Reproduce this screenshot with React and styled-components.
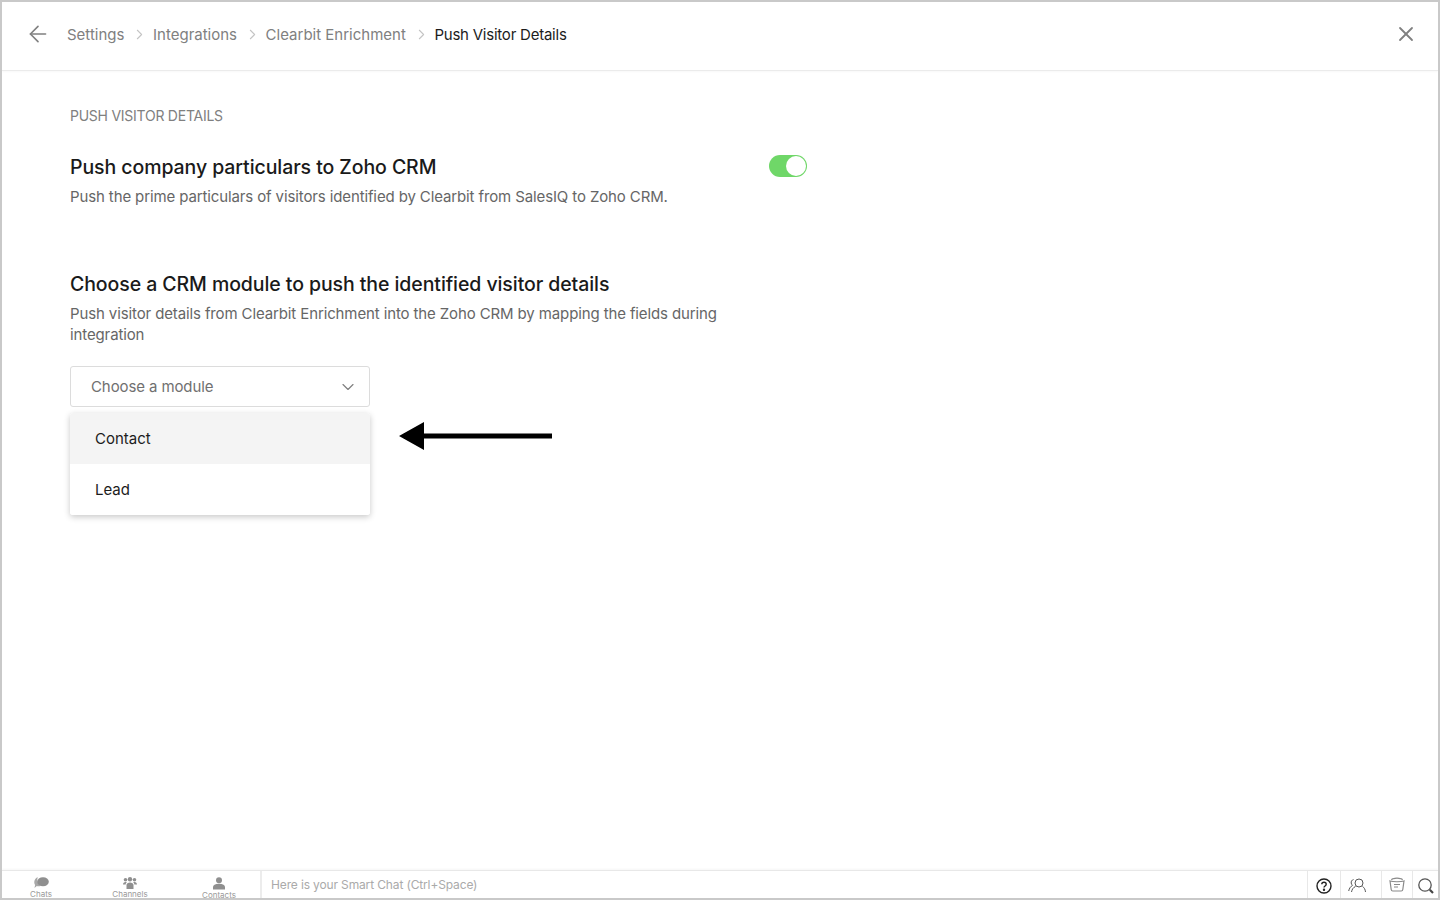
import styled, { createGlobalStyle } from "styled-components";
import { ArrowLeft, ChevronRight, ChevronDown, X } from "lucide-react";

const Global = createGlobalStyle`
  html, body { margin: 0; padding: 0; height: 100%; background: #fff; }
  * { box-sizing: border-box; }
  body { font-family: Inter, "Noto Sans", sans-serif; }
`;

const Frame = styled.div`
  height: 900px;
  border: 2px solid #c9c9c9;
  display: flex;
  flex-direction: column;
  overflow: hidden;
  background: #fff;
`;

const Header = styled.header`
  height: 69px;
  flex: none;
  display: flex;
  align-items: center;
  padding: 0 20px 4px 23px;
  border-bottom: 1px solid #ebebeb;
  box-shadow: 0 1px 2px rgba(0, 0, 0, 0.03);
`;

const BackButton = styled.div`
  display: flex;
  color: #808080;
  margin-right: 16px;
`;

const Crumb = styled.span`
  font-size: 15px;
  letter-spacing: ${(p) => (p.$current ? "-0.23px" : "0")};
  color: ${(p) => (p.$current ? "#1c1c1c" : "#808080")};
`;

const Sep = styled.span`
  display: flex;
  color: #c4c4c4;
  margin: 0 4.600px 0 7px;
`;

const CloseButton = styled.div`
  display: flex;
  margin-left: auto;
  color: #808080;
`;

const Main = styled.main`
  flex: 1;
  padding: 37px 68px 0;
`;

const SectionLabel = styled.div`
  font-size: 14px;
  line-height: 16px;
  letter-spacing: -0.25px;
  color: #808080;
  margin-bottom: 30px;
`;

const Block = styled.section`
  width: 737px;
  position: relative;
  margin-bottom: ${(p) => p.$gap || 0}px;
`;

const Title = styled.h2`
  margin: 0 0 6px;
  font-size: 19.5px;
  line-height: 26px;
  font-weight: 500;
  letter-spacing: -0.08px;
  color: #1a1a1a;
`;

const Desc = styled.p`
  margin: 0;
  width: 670px;
  font-size: 15px;
  line-height: 21px;
  letter-spacing: -0.12px;
  color: #666;
`;

const Toggle = styled.div`
  position: absolute;
  top: 1px;
  right: 0;
  width: 38px;
  height: 22px;
  border-radius: 11px;
  background: #6fd768;
  display: flex;
  justify-content: flex-end;
  padding: 1px;
`;

const Knob = styled.div`
  width: 20px;
  height: 20px;
  border-radius: 50%;
  background: #fff;
`;

const SelectWrap = styled.div`
  position: relative;
  width: 300px;
  margin-top: 21px;
`;

const SelectBox = styled.div`
  height: 41px;
  border: 1px solid #dcdcdc;
  border-radius: 3px;
  display: flex;
  align-items: center;
  justify-content: space-between;
  padding: 0 11px 0 20px;
  font-size: 15px;
  letter-spacing: -0.1px;
  color: #707070;
`;

const Arrowhead = styled(ChevronDown)`
  color: #808080;
`;

const Menu = styled.div`
  position: absolute;
  top: 47px;
  left: 0;
  width: 300px;
  background: #fff;
  border-radius: 3px;
  box-shadow: 0 2px 6px rgba(0, 0, 0, 0.22);
  overflow: hidden;
`;

const Option = styled.div`
  height: 51px;
  display: flex;
  align-items: center;
  padding-left: 25px;
  font-size: 15px;
  color: #1c1c1c;
  background: ${(p) => (p.$active ? "#f4f4f4" : "#fff")};
`;

const Pointer = styled.svg`
  position: absolute;
  top: 55px;
  left: 329px;
`;

const BottomBar = styled.footer`
  height: 28px;
  flex: none;
  display: flex;
  border-top: 1px solid #e8e8e8;
  box-shadow: 0 -1px 2px rgba(0, 0, 0, 0.04);
`;

const Tabs = styled.nav`
  width: 260px;
  flex: none;
  display: flex;
  border-right: 2px solid #ececec;
`;

const Tab = styled.div`
  width: ${(p) => p.$w}px;
  display: flex;
  flex-direction: column;
  align-items: center;
  padding-top: 6px;
  & > svg { flex: none; }
`;

const TabLabel = styled.span`
  flex: none;
  font-size: 8px;
  line-height: 9px;
  color: #999;
  margin-top: 1px;
`;

const SmartChat = styled.div`
  flex: 1;
  padding-left: 9px;
  font-size: 12px;
  letter-spacing: -0.14px;
  line-height: 28px;
  color: #aaa;
`;

const Tool = styled.div`
  width: ${(p) => p.$w}px;
  flex: none;
  display: flex;
  align-items: center;
  justify-content: center;
  border-left: 1px solid #e8e8e8;
  padding: ${(p) => p.$top ?? 2}px ${(p) => p.$shift || 0}px 0 0;
`;

const ChatsIcon = () => (
  <svg width="15" height="12" viewBox="0 0 15 12" fill="#8f8f8f">
    <path d="M1 2.500C2 1 3 .5 4 .3 2.800 2 2.800 5.500 6.500 9 5 9.500 3.500 9.300 2.800 9L.5 11l.6-3C0 6.500 0 4 1 2.500z" fill="#a8a8a8" />
    <ellipse cx="9" cy="4.700" rx="5.800" ry="4.500" />
  </svg>
);

const ChannelsIcon = () => (
  <svg width="14" height="12" viewBox="0 0 14 12" fill="#8f8f8f">
    <circle cx="2.500" cy="2.800" r="1.800" />
    <circle cx="7" cy="2.300" r="2.200" />
    <circle cx="11.500" cy="2.800" r="1.800" />
    <path d="M0 7.500C0 6 1 5 2.500 5c.6 0 1 .1 1.300.3C3 6 2.700 6.700 2.700 7.500zM11.300 7.500c0-.8-.3-1.500-1.100-2.200.3-.2.7-.3 1.300-.3C13 5 14 6 14 7.500z" />
    <path d="M3.500 12V8c0-1.500 1.500-2.500 3.500-2.500s3.500 1 3.500 2.500v4z" />
  </svg>
);

const ContactsIcon = () => (
  <svg width="12" height="13" viewBox="0 0 12 13" fill="#8f8f8f">
    <circle cx="6" cy="3.200" r="3" />
    <path d="M0 12.500V10c0-2 2-3.300 6-3.300S12 8 12 10v2.500z" />
  </svg>
);

const HelpIcon = () => (
  <svg width="16" height="16" viewBox="0 0 16 16" fill="none" stroke="#222" strokeWidth="1.400">
    <circle cx="8" cy="8" r="7" />
    <path d="M5.800 6.300C5.800 5 6.800 4.300 8 4.300s2.200.8 2.200 2c0 1.700-2.200 1.700-2.200 3.300" />
    <circle cx="8" cy="11.700" r=".5" fill="#222" />
  </svg>
);

const PeopleIcon = () => (
  <svg width="18" height="15" viewBox="0 0 18 15" fill="none" stroke="#555" strokeWidth="1">
    <circle cx="11" cy="5" r="4" />
    <path d="M7.500 8.500C5 9.500 4 11.500 3.500 14M14.500 8.500c1.800 1 2.700 3 3 5.500" />
    <path d="M5.500 1.500C3.800 2 3 3.400 3.200 5c.1 1 .6 1.800 1.300 2.400C2.500 8.500 1.200 10.500.7 13" />
  </svg>
);

const NotesIcon = () => (
  <svg width="16" height="15" viewBox="0 0 16 15" fill="none" stroke="#8a8a8a" strokeWidth="1.200">
    <path d="M1 4c3 1 11 1 14 0l-1.200 8.500c-.1.900-.7 1.500-1.600 1.500H3.800c-.9 0-1.500-.6-1.600-1.500z" />
    <path d="M2.500 3.200C2.800 2 3.500 1.800 4.500 1.700M13.500 3.200c-.3-1.200-1-1.400-2-1.500M4.500 1.700C6 .8 10 .8 11.500 1.700" />
    <path d="M5 7.500h6M5 10h4" />
  </svg>
);

const SearchIcon = () => (
  <svg width="18" height="18" viewBox="0 0 18 18" fill="none">
    <circle cx="8" cy="8" r="6.200" stroke="#555" strokeWidth="1.300" />
    <path d="M12.800 12.800L16 16" stroke="#444" strokeWidth="2.200" />
  </svg>
);

export default function App() {
  return (
    <Frame>
      <Global />
      <Header>
        <BackButton>
          <ArrowLeft size={26} strokeWidth={1.5} />
        </BackButton>
        <Crumb>Settings</Crumb>
        <Sep><ChevronRight size={17} strokeWidth={1.5} /></Sep>
        <Crumb>Integrations</Crumb>
        <Sep><ChevronRight size={17} strokeWidth={1.5} /></Sep>
        <Crumb>Clearbit Enrichment</Crumb>
        <Sep><ChevronRight size={17} strokeWidth={1.5} /></Sep>
        <Crumb $current>Push Visitor Details</Crumb>
        <CloseButton>
          <X size={24} strokeWidth={1.8} />
        </CloseButton>
      </Header>

      <Main>
        <SectionLabel>PUSH VISITOR DETAILS</SectionLabel>
        <Block $gap={64}>
          <Title>Push company particulars to Zoho CRM</Title>
          <Desc>Push the prime particulars of visitors identified by Clearbit from SalesIQ to Zoho CRM.</Desc>
          <Toggle><Knob /></Toggle>
        </Block>
        <Block>
          <Title>Choose a CRM module to push the identified visitor details</Title>
          <Desc>Push visitor details from Clearbit Enrichment into the Zoho CRM by mapping the fields during integration</Desc>
          <SelectWrap>
            <SelectBox>
              Choose a module
              <Arrowhead size={20} strokeWidth={1.4} />
            </SelectBox>
            <Menu>
              <Option $active>Contact</Option>
              <Option>Lead</Option>
            </Menu>
            <Pointer width="154" height="30" viewBox="0 0 154 30">
              <path d="M0 15L25 1v11.500h128v5H25V29z" fill="#000" />
            </Pointer>
          </SelectWrap>
        </Block>
      </Main>

      <BottomBar>
        <Tabs>
          <Tab $w={78}><ChatsIcon /><TabLabel>Chats</TabLabel></Tab>
          <Tab $w={100}><ChannelsIcon /><TabLabel>Channels</TabLabel></Tab>
          <Tab $w={78}><ContactsIcon /><TabLabel>Contacts</TabLabel></Tab>
        </Tabs>
        <SmartChat>Here is your Smart Chat (Ctrl+Space)</SmartChat>
        <Tool $w={33}><HelpIcon /></Tool>
        <Tool $w={41} $shift={8}><PeopleIcon /></Tool>
        <Tool $w={31} $top={0}><NotesIcon /></Tool>
        <Tool $w={26}><SearchIcon /></Tool>
      </BottomBar>
    </Frame>
  );
}
